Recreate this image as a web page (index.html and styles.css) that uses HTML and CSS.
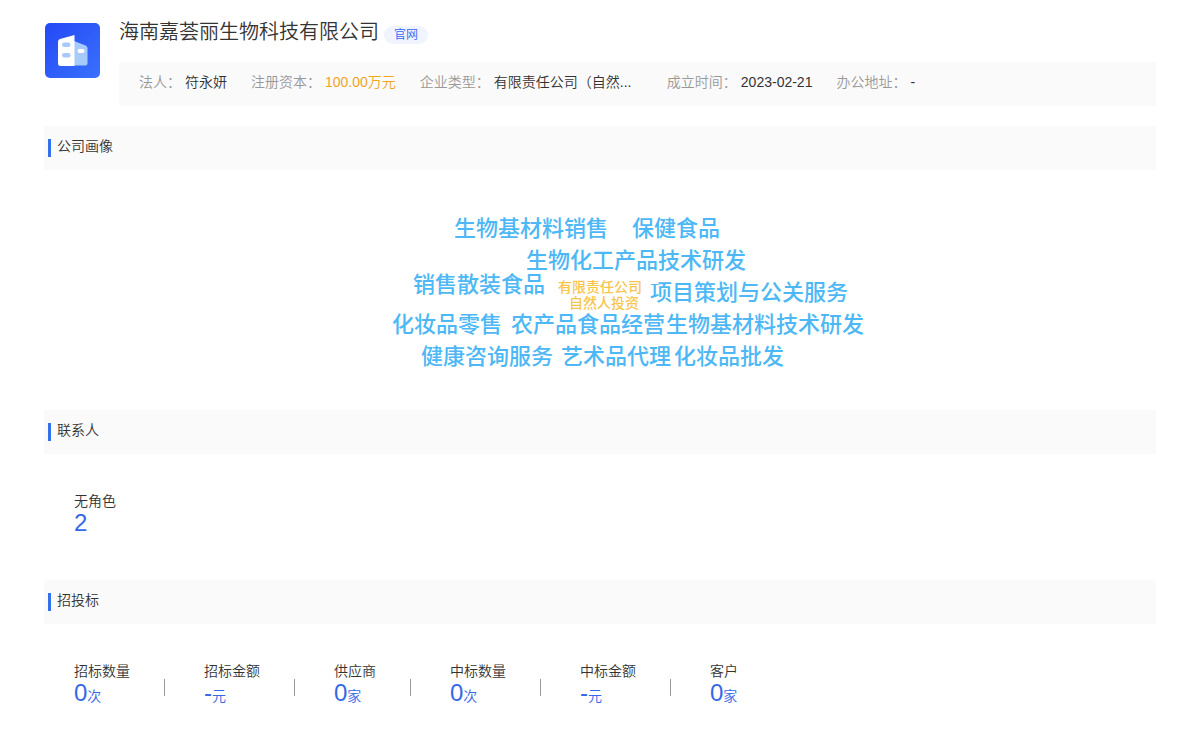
FILE: index.html
```html
<!DOCTYPE html>
<html lang="zh-CN">
<head>
<meta charset="utf-8">
<title>海南嘉荟丽生物科技有限公司</title>
<link rel="stylesheet" href="styles.css">
</head>
<body>
<main class="page">
  <header class="company">
    <svg class="logo" viewBox="0 0 55 55" aria-hidden="true">
      <defs>
        <linearGradient id="logo-bg" x1="0" y1="0" x2="1" y2="1">
          <stop offset="0" stop-color="#2448f5"/>
          <stop offset="1" stop-color="#3971fc"/>
        </linearGradient>
      </defs>
      <rect width="55" height="55" rx="5" fill="url(#logo-bg)"/>
      <path d="M29 18l11.500 4.400q2 .8 2 2.800V40q0 2.500-2.500 2.500H29z" fill="#a6cbfb"/>
      <path d="M13 18.500q0-2 2-2.600L29.500 12v31H15.500Q13 43 13 40.500z" fill="#fff"/>
      <rect x="17" y="19.500" width="8.500" height="4.500" rx="2.200" fill="#a9c9fb"/>
      <rect x="17" y="30" width="8.500" height="4.500" rx="2.200" fill="#a9c9fb"/>
      <rect x="32.500" y="26" width="7" height="4" rx="2" fill="#fff"/>
    </svg>
    <div class="company-main">
      <div class="title-row">
        <h1 class="title">海南嘉荟丽生物科技有限公司</h1>
        <a class="site-link" href="#">官网</a>
      </div>
      <dl class="facts">
        <div class="fact"><dt>法人：</dt><dd>符永妍</dd></div>
        <div class="fact"><dt>注册资本：</dt><dd class="money">100.00万元</dd></div>
        <div class="fact"><dt>企业类型：</dt><dd class="kind">有限责任公司（自然...</dd></div>
        <div class="fact"><dt>成立时间：</dt><dd>2023-02-21</dd></div>
        <div class="fact"><dt>办公地址：</dt><dd>-</dd></div>
      </dl>
    </div>
  </header>

  <section>
    <h2 class="section-title">公司画像</h2>
    <div class="cloud">
      <span class="word w1">生物基材料销售</span>
      <span class="word w2">保健食品</span>
      <span class="word w3">生物化工产品技术研发</span>
      <span class="word w4">销售散装食品</span>
      <span class="word small w5">有限责任公司</span>
      <span class="word small w6">自然人投资</span>
      <span class="word w7">项目策划与公关服务</span>
      <span class="word w8">化妆品零售</span>
      <span class="word w9">农产品食品经营</span>
      <span class="word w10">生物基材料技术研发</span>
      <span class="word w11">健康咨询服务</span>
      <span class="word w12">艺术品代理</span>
      <span class="word w13">化妆品批发</span>
    </div>
  </section>

  <section>
    <h2 class="section-title">联系人</h2>
    <dl class="stats">
      <div class="stat"><dt>无角色</dt><dd>2</dd></div>
    </dl>
  </section>

  <section>
    <h2 class="section-title">招投标</h2>
    <dl class="stats">
      <div class="stat"><dt>招标数量</dt><dd>0<small>次</small></dd></div>
      <div class="stat"><dt>招标金额</dt><dd>-<small>元</small></dd></div>
      <div class="stat"><dt>供应商</dt><dd>0<small>家</small></dd></div>
      <div class="stat"><dt>中标数量</dt><dd>0<small>次</small></dd></div>
      <div class="stat"><dt>中标金额</dt><dd>-<small>元</small></dd></div>
      <div class="stat"><dt>客户</dt><dd>0<small>家</small></dd></div>
    </dl>
  </section>
</main>
</body>
</html>
```

FILE: styles.css
```css
* {
  box-sizing: border-box;
  margin: 0;
  padding: 0;
}

body {
  background: #fff;
  color: #333;
  font: 350 14px/20px "Liberation Sans", "Noto Sans CJK SC", sans-serif;
}

.page {
  padding: 16px 44px 0;
}

.company {
  display: flex;
  gap: 19px;
  padding-left: 1px;
  margin-bottom: 20px;
}

.logo {
  flex: none;
  width: 55px;
  height: 55px;
  margin-top: 7px;
}

.company-main {
  flex: 1;
  min-width: 0;
}

.title-row {
  display: flex;
  align-items: flex-start;
  gap: 5px;
  height: 46px;
}

.title {
  font-size: 20px;
  font-weight: 350;
  line-height: 32px;
}

.site-link {
  margin-top: 10px;
  padding: 0 10px;
  border-radius: 9px;
  background: #eff4fe;
  color: #2f66f0;
  font-size: 12px;
  line-height: 18px;
  text-decoration: none;
}

.facts {
  display: flex;
  flex-wrap: wrap;
  column-gap: 24px;
  padding: 10px 20px 14px;
  background: #fafafa;
}

.fact {
  display: flex;
  gap: 4px;
}

.fact dt {
  color: #999;
}

.fact .money {
  color: #f0a51f;
}

.fact .kind {
  min-width: 149px;
}

.section-title {
  display: flex;
  align-items: center;
  gap: 6px;
  height: 44px;
  padding: 0 4px 4px;
  background: #fafafa;
  font-size: 14px;
  font-weight: 350;
  line-height: 20px;
}

.section-title::before {
  content: "";
  width: 3px;
  height: 18px;
  margin-top: 4px;
  background: #3370eb;
}

/* Word cloud: a free canvas, centred in the section. */
.cloud {
  position: relative;
  width: 600px;
  height: 240px;
  margin: 0 auto;
}

.word {
  position: absolute;
  color: #4db8f5;
  font-size: 22px;
  font-weight: 500;
  line-height: 32px;
  white-space: nowrap;
}

.word.small {
  color: #f7c54b;
  font-size: 14px;
  line-height: 16px;
}

.w1 { left: 154px; top: 43px; }
.w2 { left: 332px; top: 43px; }
.w3 { left: 226px; top: 75px; }
.w4 { left: 113px; top: 99px; }
.w5 { left: 258px; top: 109px; }
.w6 { left: 269px; top: 125px; }
.w7 { left: 350px; top: 107px; }
.w8 { left: 92px; top: 139px; }
.w9 { left: 211px; top: 139px; }
.w10 { left: 366px; top: 139px; }
.w11 { left: 121px; top: 171px; }
.w12 { left: 261px; top: 171px; }
.w13 { left: 374px; top: 171px; }

.stats {
  display: flex;
  padding: 37px 30px 45px;
}

.stat {
  display: flex;
  flex-direction: column;
}

.stat + .stat {
  position: relative;
  margin-left: 34px;
  padding-left: 40px;
}

.stat + .stat::before {
  content: "";
  position: absolute;
  left: 0;
  top: 18px;
  width: 1px;
  height: 17px;
  background: #999;
}

.stat dd {
  color: #3468e8;
  font-size: 24px;
  line-height: 24px;
}

.stat small {
  font-size: 14px;
}
```
